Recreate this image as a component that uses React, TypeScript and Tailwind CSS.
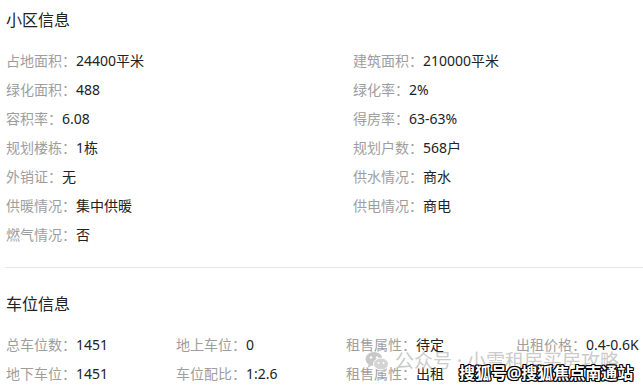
import React from "react";

const font = { fontFamily: '"Noto Sans", "Noto Sans CJK SC", sans-serif' };

const estateRows: [string, string][] = [
  ["占地面积：", "24400平米"],
  ["建筑面积：", "210000平米"],
  ["绿化面积：", "488"],
  ["绿化率：", "2%"],
  ["容积率：", "6.08"],
  ["得房率：", "63-63%"],
  ["规划楼栋：", "1栋"],
  ["规划户数：", "568户"],
  ["外销证：", "无"],
  ["供水情况：", "商水"],
  ["供暖情况：", "集中供暖"],
  ["供电情况：", "商电"],
  ["燃气情况：", "否"],
];

const parkingRows: [string, string][] = [
  ["总车位数：", "1451"],
  ["地上车位：", "0"],
  ["租售属性：", "待定"],
  ["出租价格：", "0.4-0.6K"],
  ["地下车位：", "1451"],
  ["车位配比：", "1:2.6"],
  ["租售属性：", "出租"],
  ["", ""],
];

function Field({ label, value }: { label: string; value: string }) {
  return (
    <div className="flex h-[29px] items-center whitespace-nowrap text-[14px] leading-[29px]">
      <span className="text-[#9e9e9e]">{label}</span>
      <span className="text-[#222222]">{value}</span>
    </div>
  );
}

function WechatIcon() {
  return (
    <svg width="24" height="20" viewBox="0 0 24 20" fill="none">
      <ellipse cx="9" cy="8" rx="8.5" ry="7" fill="#c8c8c8" />
      <path d="M3.5 13.5 L2.5 17 L6.5 14.5 Z" fill="#c8c8c8" />
      <circle cx="6" cy="6.5" r="1.2" fill="#ffffff" />
      <circle cx="12" cy="6.5" r="1.2" fill="#ffffff" />
      <ellipse cx="16" cy="13" rx="7.5" ry="6" fill="#d4d4d4" stroke="#ffffff" strokeWidth="1" />
      <path d="M20.5 17.5 L22 20 L18 18.5 Z" fill="#d4d4d4" />
      <circle cx="13.5" cy="12" r="1" fill="#ffffff" />
      <circle cx="18.5" cy="12" r="1" fill="#ffffff" />
    </svg>
  );
}

export default function App() {
  return (
    <div className="relative h-[389px] w-[643px] overflow-hidden bg-white" style={font}>
      <section className="px-[6px] pt-2">
        <h2 className="text-[16px] leading-[24px] text-[#222222]">小区信息</h2>
        <div className="mt-[14px] grid grid-cols-[347px_1fr]">
          {estateRows.map(([l, v]) => (
            <Field key={l} label={l} value={v} />
          ))}
        </div>
      </section>

      <div className="ml-[5px] mt-[18px] border-t border-[#e6e6e6]" />

      <section className="px-[6px] pt-[24px]">
        <h2 className="text-[16px] leading-[24px] text-[#222222]">车位信息</h2>
        <div className="mt-[14px] grid grid-cols-[170px_170px_170px_1fr]">
          {parkingRows.map(([l, v], i) => (
            <Field key={i} label={l} value={v} />
          ))}
        </div>
      </section>

      <div className="pointer-events-none absolute left-[365px] top-[350px] flex items-center gap-[6px]">
        <WechatIcon />
        <span className="whitespace-nowrap text-[19px] leading-[22px] text-[#bdbdbd]/80">
          公众号 · 小雪租房买房攻略
        </span>
      </div>
      <div
        className="pointer-events-none absolute left-[459px] top-[363px] whitespace-nowrap text-[16px] font-bold leading-[20px] text-white"
        style={{ textShadow: "1px 1px 0 #000, -1px -1px 0 #000, 1px -1px 0 #000, -1px 1px 0 #000, 0 1px 0 #000, 0 -1px 0 #000, 1px 0 0 #000, -1px 0 0 #000" }}
      >
        搜狐号@搜狐焦点南通站
      </div>
    </div>
  );
}
